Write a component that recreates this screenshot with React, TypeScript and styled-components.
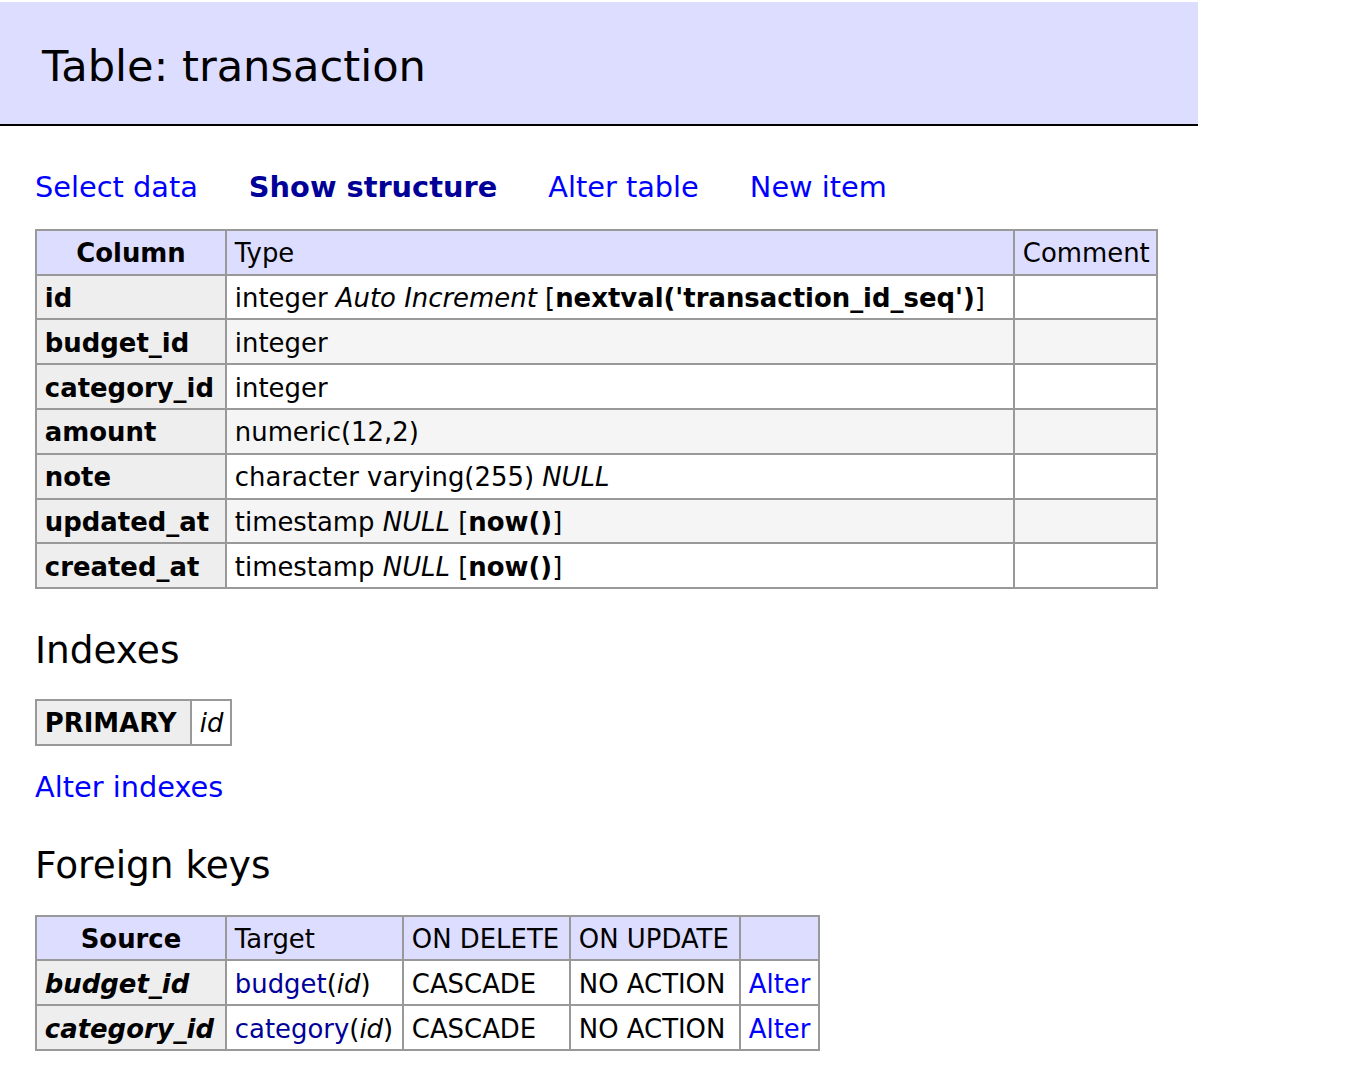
import React from 'react';
import styled, { createGlobalStyle } from 'styled-components';

const GlobalStyle = createGlobalStyle`
  html, body { margin: 0; padding: 0; background: #fff; }
  body {
    font-family: "DejaVu Sans", Verdana, sans-serif;
    font-size: 28.8px;
    line-height: 36px;
    color: #000;
  }
`;

const Page = styled.div`
  padding-top: 2px;
`;

const Header = styled.h1`
  margin: 0 174px 0 0;
  padding: 37px 42px 31px;
  background: #ddf;
  border-bottom: 2px solid #000;
  font-size: 43.2px;
  line-height: 54px;
  font-weight: normal;
`;

const Content = styled.main`
  padding: 0 0 20px 35px;
`;

const Links = styled.nav<{ $top: number }>`
  display: flex;
  gap: 51px;
  margin-top: ${(p) => p.$top}px;
  white-space: nowrap;
`;

const NavLink = styled.a<{ $active?: boolean }>`
  color: ${(p) => (p.$active ? '#009' : '#00f')};
  font-weight: ${(p) => (p.$active ? 'bold' : 'normal')};
  text-decoration: none;
`;

const SectionTitle = styled.h3<{ $top: number }>`
  margin: ${(p) => p.$top}px 0 0;
  font-size: 37.44px;
  line-height: 46.8px;
  font-weight: normal;
`;

const Grid = styled.table<{ $top: number; $width: number }>`
  margin-top: ${(p) => p.$top}px;
  width: ${(p) => p.$width}px;
  table-layout: fixed;
  border-collapse: separate;
  border-spacing: 0;
  border-top: 2px solid #999;
  border-left: 2px solid #999;
  font-size: 25.92px;
  line-height: 32.4px;
`;

const Col = styled.col<{ $w: number }>`
  width: ${(p) => p.$w}px;
`;

const cellBase = `
  box-sizing: border-box;
  border-right: 2px solid #999;
  border-bottom: 2px solid #999;
  padding: 6.5px 7.8px 3.9px;
  white-space: nowrap;
  overflow: hidden;
  vertical-align: middle;
`;

const ColumnHead = styled.th`
  ${cellBase}
  background: #ddf;
  font-weight: bold;
  text-align: center;
`;

const HeadCell = styled.td`
  ${cellBase}
  background: #ddf;
  text-align: left;
`;

const RowHead = styled.th<{ $italic?: boolean }>`
  ${cellBase}
  background: #eee;
  font-weight: bold;
  font-style: ${(p) => (p.$italic ? 'italic' : 'normal')};
  text-align: left;
`;

const Cell = styled.td<{ $shade?: boolean; $italic?: boolean }>`
  ${cellBase}
  background: ${(p) => (p.$shade ? '#f5f5f5' : '#fff')};
  font-style: ${(p) => (p.$italic ? 'italic' : 'normal')};
  text-align: left;
`;

const TargetLink = styled.a`
  color: #009;
  text-decoration: none;
`;

const ActionLink = styled.a`
  color: #00f;
  text-decoration: none;
`;

const Para = styled.p<{ $top: number }>`
  margin: ${(p) => p.$top}px 0 0;
`;

type ColumnRow = { name: string; type: React.ReactNode };

const columns: ColumnRow[] = [
  {
    name: 'id',
    type: (
      <>
        integer <i>Auto Increment</i> [<b>nextval('transaction_id_seq')</b>]
      </>
    ),
  },
  { name: 'budget_id', type: 'integer' },
  { name: 'category_id', type: 'integer' },
  { name: 'amount', type: 'numeric(12,2)' },
  {
    name: 'note',
    type: (
      <>
        character varying(255) <i>NULL</i>
      </>
    ),
  },
  {
    name: 'updated_at',
    type: (
      <>
        timestamp <i>NULL</i> [<b>now()</b>]
      </>
    ),
  },
  {
    name: 'created_at',
    type: (
      <>
        timestamp <i>NULL</i> [<b>now()</b>]
      </>
    ),
  },
];

const foreignKeys = [
  { source: 'budget_id', table: 'budget', col: 'id', onDelete: 'CASCADE', onUpdate: 'NO ACTION' },
  { source: 'category_id', table: 'category', col: 'id', onDelete: 'CASCADE', onUpdate: 'NO ACTION' },
];

export default function App() {
  return (
    <Page>
      <GlobalStyle />
      <Header>Table: transaction</Header>
      <Content>
        <Links $top={42.5}>
          <NavLink href="#">Select data</NavLink>
          <NavLink href="#" $active>
            Show structure
          </NavLink>
          <NavLink href="#">Alter table</NavLink>
          <NavLink href="#">New item</NavLink>
        </Links>

        <Grid $top={24.3} $width={1123}>
          <colgroup>
            <Col $w={190} />
            <Col $w={788} />
            <Col $w={143} />
          </colgroup>
          <thead>
            <tr>
              <ColumnHead>Column</ColumnHead>
              <HeadCell>Type</HeadCell>
              <HeadCell>Comment</HeadCell>
            </tr>
          </thead>
          <tbody>
            {columns.map((c, i) => (
              <tr key={c.name}>
                <RowHead>{c.name}</RowHead>
                <Cell $shade={i % 2 === 1}>{c.type}</Cell>
                <Cell $shade={i % 2 === 1} />
              </tr>
            ))}
          </tbody>
        </Grid>

        <SectionTitle $top={38.3}>Indexes</SectionTitle>
        <Grid $top={24.5} $width={197}>
          <colgroup>
            <Col $w={155} />
            <Col $w={40} />
          </colgroup>
          <tbody>
            <tr>
              <RowHead>PRIMARY</RowHead>
              <Cell $italic>id</Cell>
            </tr>
          </tbody>
        </Grid>
        <Para $top={23}>
          <ActionLink href="#">Alter indexes</ActionLink>
        </Para>

        <SectionTitle $top={37.6}>Foreign keys</SectionTitle>
        <Grid $top={25.6} $width={785}>
          <colgroup>
            <Col $w={190} />
            <Col $w={177} />
            <Col $w={167} />
            <Col $w={170} />
            <Col $w={79} />
          </colgroup>
          <thead>
            <tr>
              <ColumnHead>Source</ColumnHead>
              <HeadCell>Target</HeadCell>
              <HeadCell>ON DELETE</HeadCell>
              <HeadCell>ON UPDATE</HeadCell>
              <HeadCell />
            </tr>
          </thead>
          <tbody>
            {foreignKeys.map((fk) => (
              <tr key={fk.source}>
                <RowHead $italic>{fk.source}</RowHead>
                <Cell>
                  <TargetLink href="#">{fk.table}</TargetLink>(<i>{fk.col}</i>)
                </Cell>
                <Cell>{fk.onDelete}</Cell>
                <Cell>{fk.onUpdate}</Cell>
                <Cell>
                  <ActionLink href="#">Alter</ActionLink>
                </Cell>
              </tr>
            ))}
          </tbody>
        </Grid>
      </Content>
    </Page>
  );
}
